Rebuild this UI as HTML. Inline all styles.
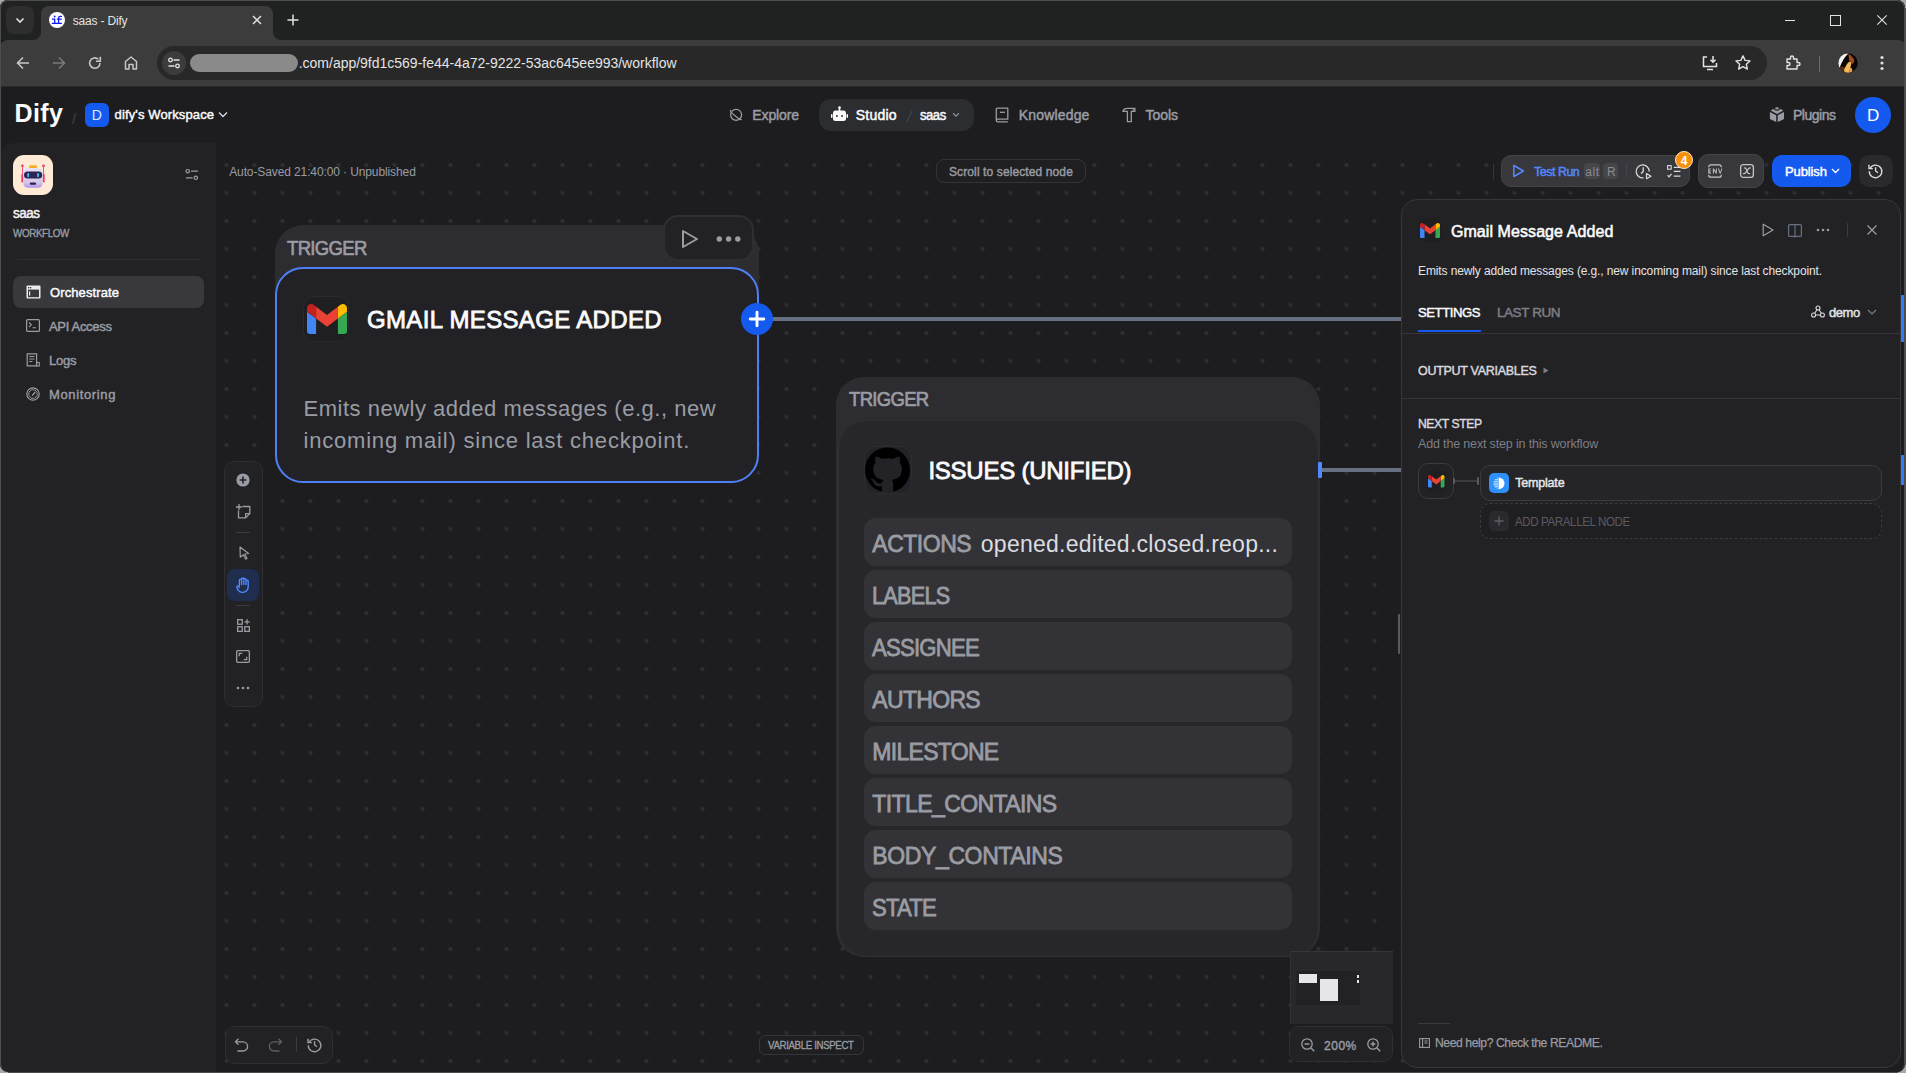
<!DOCTYPE html>
<html><head><meta charset="utf-8">
<style>
*{margin:0;padding:0;box-sizing:border-box}
html,body{width:1906px;height:1073px;overflow:hidden;background:#4d4c48}
.cn{position:absolute;width:8px;height:8px;background:#a8a8a8}
body{font-family:"Liberation Sans",sans-serif;position:relative}
.a{position:absolute}
.t{position:absolute;white-space:nowrap;line-height:1}
svg{position:absolute;overflow:visible}
#win{left:0;top:0;width:1905px;height:1072px;background:#1d1d20;border-radius:8px;overflow:hidden}
#wb{left:0;top:0;width:1905px;height:1072px;border-radius:8px;border:1px solid #4d4d4d;border-bottom:none;pointer-events:none}
.canvas{left:216px;top:143px;width:1690px;height:930px;background-color:#1d1d20;
 background-image:radial-gradient(circle at 14px 14px,#2e2e35 0,#2e2e35 1.5px,rgba(46,46,53,0) 2.3px);
 background-size:28px 28px;background-position:-3.5px 8px}
</style></head>
<body>
<div class="cn" style="left:0;top:1065px"></div><div class="cn" style="left:1898px;top:1065px"></div><div class="cn" style="left:1898px;top:0"></div><div class="cn" style="left:0;top:0"></div>
<div id="win" class="a">
<div class="a" style="left:0px;top:0px;width:1906px;height:40px;background:#202221;"></div>
<div class="a" style="left:6px;top:6px;width:28px;height:28px;background:#2e2e2e;border-radius:8px;"></div>
<svg style="left:14px;top:14px;" width="12" height="12" viewBox="0 0 12 12"><path d="M2.5 4.5 L6 8 L9.5 4.5" fill="none" stroke="#e3e3e3" stroke-width="1.6"/></svg>
<div class="a" style="left:41px;top:6px;width:232px;height:36px;background:#3c3c3c;border-radius:8px 8px 0 0;"></div>
<div class="a" style="left:33px;top:32px;width:8px;height:8px;background:#3c3c3c;"></div>
<div class="a" style="left:33px;top:32px;width:8px;height:8px;background:#202221;border-radius:0 0 8px 0;"></div>
<div class="a" style="left:273px;top:32px;width:8px;height:8px;background:#3c3c3c;"></div>
<div class="a" style="left:273px;top:32px;width:8px;height:8px;background:#202221;border-radius:0 0 0 8px;"></div>
<div class="a" style="left:49px;top:12px;width:16px;height:16px;background:#fff;border-radius:8px;"></div>
<svg style="left:45px;top:8px;" width="25" height="24" viewBox="0 0 25 24"><g stroke="#0a14ff" stroke-width="1.25" fill="none" stroke-linecap="round"><path d="M7.3 15.4H16.4"/><path d="M9.7 15.4V11H7.4"/><path d="M13.6 15.4V10.2Q13.6 8.3 15.6 8.4H16.4"/><path d="M12.3 11H16.4"/></g><circle cx="9.7" cy="8.5" r="0.9" fill="#0a14ff"/></svg>
<div class="t" style="left:72.7px;top:15.04px;font-size:12px;color:#e3e3e3;letter-spacing:-0.178px;">saas - Dify</div>
<svg style="left:252px;top:15px;" width="10" height="10" viewBox="0 0 10 10"><path d="M1 1L9 9M9 1L1 9" stroke="#e3e3e3" stroke-width="1.5"/></svg>
<svg style="left:287px;top:14px;" width="12" height="12" viewBox="0 0 12 12"><path d="M6 0.5V11.5M0.5 6H11.5" stroke="#e3e3e3" stroke-width="1.5"/></svg>
<svg style="left:1784px;top:14px;" width="12" height="12" viewBox="0 0 12 12"><path d="M1 6.5H11" stroke="#e3e3e3" stroke-width="1"/></svg>
<svg style="left:1830px;top:15px;" width="11" height="11" viewBox="0 0 11 11"><rect x="0.5" y="0.5" width="10" height="10" fill="none" stroke="#e3e3e3" stroke-width="1"/></svg>
<svg style="left:1877px;top:15px;" width="10" height="10" viewBox="0 0 10 10"><path d="M0.3 0.3L9.7 9.7M9.7 0.3L0.3 9.7" stroke="#e3e3e3" stroke-width="1.1"/></svg>
<div class="a" style="left:0px;top:40px;width:1906px;height:46px;background:#3c3c3c;border-radius:8px 8px 0 0;"></div>
<div class="a" style="left:0px;top:86px;width:1906px;height:1px;background:#2b2b2b;"></div>
<svg style="left:15px;top:55px;" width="16" height="16" viewBox="0 0 16 16"><path d="M14 8H2.5M8 2.5L2.5 8L8 13.5" fill="none" stroke="#c7c7c7" stroke-width="1.6"/></svg>
<svg style="left:51px;top:55px;" width="16" height="16" viewBox="0 0 16 16"><path d="M2 8H13.5M8 2.5L13.5 8L8 13.5" fill="none" stroke="#7a7a7a" stroke-width="1.6"/></svg>
<svg style="left:87px;top:55px;" width="16" height="16" viewBox="0 0 16 16"><path d="M13 8A5.2 5.2 0 1 1 11.3 4.2" fill="none" stroke="#c7c7c7" stroke-width="1.6"/><path d="M13.3 1.8V6.2H8.9" fill="none" stroke="#c7c7c7" stroke-width="1.6"/></svg>
<svg style="left:123px;top:55px;" width="16" height="16" viewBox="0 0 16 16"><path d="M2.5 14V6.5L8 2L13.5 6.5V14H10V9.5H6V14Z" fill="none" stroke="#c7c7c7" stroke-width="1.5" stroke-linejoin="round"/></svg>
<div class="a" style="left:157px;top:46px;width:1610px;height:34px;background:#282828;border-radius:17px;"></div>
<div class="a" style="left:162px;top:51px;width:24px;height:24px;background:#3c3c3c;border-radius:12px;"></div>
<svg style="left:167px;top:56px;" width="14" height="14" viewBox="0 0 14 14"><circle cx="3.5" cy="4" r="1.8" fill="none" stroke="#e3e3e3" stroke-width="1.3"/><path d="M6.5 4H12.5" stroke="#e3e3e3" stroke-width="1.3"/><circle cx="10.5" cy="10" r="1.8" fill="none" stroke="#e3e3e3" stroke-width="1.3"/><path d="M1.5 10H7.5" stroke="#e3e3e3" stroke-width="1.3"/></svg>
<div class="a" style="left:190px;top:54px;width:108px;height:18px;background:#8a8a8b;border-radius:9px;"></div>
<div class="t" style="left:298.7px;top:55.95px;font-size:14px;color:#e3e3e3;letter-spacing:-0.008px;">.com/app/9fd1c569-fe44-4a72-9222-53ac645ee993/workflow</div>
<svg style="left:1701px;top:54px;" width="18" height="18" viewBox="0 0 18 18"><path d="M6 3H2.5V12.5H15.5V9" fill="none" stroke="#e3e3e3" stroke-width="1.5"/><path d="M6 15.5H12" stroke="#e3e3e3" stroke-width="1.5"/><path d="M12 2V8M9.5 5.8L12 8.3L14.5 5.8" fill="none" stroke="#e3e3e3" stroke-width="1.5"/></svg>
<svg style="left:1734px;top:54px;" width="18" height="18" viewBox="0 0 18 18"><path d="M9 1.8L11.1 6.4L16 6.9L12.3 10.2L13.4 15.1L9 12.6L4.6 15.1L5.7 10.2L2 6.9L6.9 6.4Z" fill="none" stroke="#e3e3e3" stroke-width="1.4" stroke-linejoin="round"/></svg>
<svg style="left:1784px;top:54px;" width="18" height="18" viewBox="0 0 18 18"><path d="M3 5H6.5V3.5A1.5 1.5 0 0 1 9.5 3.5V5H13V8.5H14.5A1.5 1.5 0 0 1 14.5 11.5H13V15H3V11.5H4.5A1.5 1.5 0 0 0 4.5 8.5H3Z" fill="none" stroke="#e3e3e3" stroke-width="1.4" stroke-linejoin="round"/></svg>
<div class="a" style="left:1819px;top:56px;width:1px;height:16px;background:#6a6a6a;"></div>
<svg style="left:1837.5px;top:53px;" width="20" height="20" viewBox="0 0 20 20"><defs><clipPath id="av"><circle cx="10" cy="10" r="9.7"/></clipPath></defs><g clip-path="url(#av)"><rect width="20" height="20" fill="#0a0604"/><path d="M10.5 0.5Q5 5 1.5 15L-1 15V0Z" fill="#f2f2f2"/><path d="M1 14Q5 13 8 15L9 20H0Z" fill="#5a2a12"/><path d="M6 17Q9 9 12 8.5Q14 9 13 12L11 20H7Z" fill="#f0b85a"/><path d="M10.5 0.5Q14 3 16 6Q17 10 14 11Q12 9 11 7Z" fill="#9a4a1c"/><path d="M12 15Q14 14 14.5 18L13 20H11Z" fill="#e8a040"/></g></svg>
<svg style="left:1879px;top:55px;" width="6" height="16" viewBox="0 0 6 16"><circle cx="3" cy="2.5" r="1.6" fill="#e3e3e3"/><circle cx="3" cy="8" r="1.6" fill="#e3e3e3"/><circle cx="3" cy="13.5" r="1.6" fill="#e3e3e3"/></svg>
<div class="t" style="left:14.5px;top:100.83px;font-size:25px;color:#fbfbfc;font-weight:bold;letter-spacing:0.425px;">Dify</div>
<div class="t" style="left:72.0px;top:111.3px;font-size:15px;color:#3f4046;">/</div>
<div class="a" style="left:85px;top:103px;width:24px;height:24px;background:#155aef;border-radius:6px;"></div>
<div class="t" style="left:91.8px;top:108.15px;font-size:14px;color:#dfe8ff;">D</div>
<div class="t" style="left:114.6px;top:107.99px;font-size:13px;color:#fbfbfc;-webkit-text-stroke:0.442px #fbfbfc;letter-spacing:0.12px;">dify's Workspace</div>
<svg style="left:218px;top:111px;" width="10" height="7" viewBox="0 0 10 7"><path d="M1 1.5L5 5.5L9 1.5" fill="none" stroke="#d9d9de" stroke-width="1.3"/></svg>
<svg style="left:728px;top:106px;" width="16" height="16" viewBox="0 0 16 16"><circle cx="8.1" cy="8.8" r="5.5" fill="none" stroke="#9a9ca3" stroke-width="1.3"/><path d="M-7.4 0A7.4 1.6 0 0 0 7.4 0" transform="translate(8.1 8.6) rotate(40)" fill="none" stroke="#9a9ca3" stroke-width="1.2"/></svg>
<div class="t" style="left:752.3px;top:108.15px;font-size:14px;color:#9a9ca3;-webkit-text-stroke:0.476px #9a9ca3;letter-spacing:-0.112px;">Explore</div>
<div class="a" style="left:819px;top:99px;width:155px;height:32px;background:#2c2d31;border-radius:12px;"></div>
<svg style="left:831px;top:106px;" width="17" height="16" viewBox="0 0 17 16"><rect x="2" y="4.5" width="13" height="10.5" rx="2.5" fill="#fbfbfc"/><rect x="7.7" y="1.5" width="1.6" height="3.5" fill="#fbfbfc"/><circle cx="8.5" cy="1.6" r="1.3" fill="#fbfbfc"/><rect x="0" y="8" width="1.5" height="4" rx="0.7" fill="#fbfbfc"/><rect x="15.5" y="8" width="1.5" height="4" rx="0.7" fill="#fbfbfc"/><rect x="5" y="9.2" width="1.8" height="1.6" fill="#2c2d31"/><rect x="10.2" y="9.2" width="1.8" height="1.6" fill="#2c2d31"/></svg>
<div class="t" style="left:855.7px;top:108.15px;font-size:14px;color:#fbfbfc;-webkit-text-stroke:0.476px #fbfbfc;letter-spacing:0.242px;">Studio</div>
<svg style="left:906px;top:110px;" width="7" height="13" viewBox="0 0 7 13"><path d="M6.2 0.5L0.8 12.5" stroke="#4a4b52" stroke-width="1"/></svg>
<div class="t" style="left:919.8px;top:108.15px;font-size:14px;color:#fbfbfc;-webkit-text-stroke:0.476px #fbfbfc;letter-spacing:-0.49px;transform:scaleX(0.9325);transform-origin:0.0px 0;">saas</div>
<svg style="left:952px;top:112px;" width="8" height="6" viewBox="0 0 8 6"><path d="M1 1.2L4 4.2L7 1.2" fill="none" stroke="#9a9ca3" stroke-width="1.1"/></svg>
<svg style="left:995px;top:107px;" width="14" height="16" viewBox="0 0 14 16"><path d="M1.3 14V2.2Q1.3 1.2 2.3 1.2H12.8V12.2H2.8Q1.3 12.2 1.3 13.5Q1.3 14.8 2.8 14.8H12.8" fill="none" stroke="#9a9ca3" stroke-width="1.3" stroke-linejoin="round"/><path d="M5 5.3H10" stroke="#9a9ca3" stroke-width="1.3"/></svg>
<div class="t" style="left:1018.7px;top:108.15px;font-size:14px;color:#9a9ca3;-webkit-text-stroke:0.476px #9a9ca3;letter-spacing:0.179px;">Knowledge</div>
<svg style="left:1122px;top:107px;" width="14" height="16" viewBox="0 0 14 16"><path d="M0.9 4.4Q1.6 1.3 5 1.3H12.9V4.4H9.3V14.7H5.4V4.4Z" fill="none" stroke="#9a9ca3" stroke-width="1.3" stroke-linejoin="round"/><path d="M11.2 1.3V4.4" stroke="#9a9ca3" stroke-width="1"/></svg>
<div class="t" style="left:1145.6px;top:108.15px;font-size:14px;color:#9a9ca3;-webkit-text-stroke:0.476px #9a9ca3;letter-spacing:-0.069px;">Tools</div>
<svg style="left:1769px;top:106px;" width="16" height="17" viewBox="0 0 16 17"><path d="M0.9 6L7.2 9.2V16.1L0.9 13Z" fill="#9a9ca3"/><path d="M15 6L8.7 9.2V16.1L15 13Z" fill="#9a9ca3"/><path d="M1.6 4.6L8 1.3L14.4 4.6L8 8.1Z" fill="#9a9ca3"/><ellipse cx="8" cy="2.4" rx="2.5" ry="1.7" fill="#9a9ca3" stroke="#1d1d20" stroke-width="1.1"/></svg>
<div class="t" style="left:1793.0px;top:108.15px;font-size:14px;color:#9a9ca3;-webkit-text-stroke:0.476px #9a9ca3;letter-spacing:-0.487px;">Plugins</div>
<div class="a" style="left:1855px;top:97px;width:36px;height:36px;background:#155aef;border-radius:18px;"></div>
<div class="t" style="left:1867.0px;top:106.61px;font-size:17px;color:#ffffff;">D</div>
<div class="a canvas"></div>
<div class="a" style="left:1px;top:143px;width:215px;height:929px;background:#222225;border-radius:12px 0 0 8px;"></div>
<div class="a" style="left:13px;top:155px;width:40px;height:40px;background:#ffead5;border-radius:11px;"></div>
<svg style="left:13px;top:155px;" width="40" height="40" viewBox="0 0 40 40"><defs><linearGradient id="rb" x1="0" y1="0" x2="0" y2="1"><stop offset="0" stop-color="#e6e2f4"/><stop offset="0.75" stop-color="#d2c6ea"/><stop offset="1" stop-color="#b592e6"/></linearGradient><linearGradient id="yb" x1="0" y1="0" x2="0" y2="1"><stop offset="0" stop-color="#f9c646"/><stop offset="1" stop-color="#e8a010"/></linearGradient></defs>
 <rect x="9" y="11" width="0.9" height="9" fill="#f0407a"/><rect x="30.1" y="11" width="0.9" height="9" fill="#f0407a"/>
 <rect x="8.3" y="19" width="2" height="8.5" rx="1" fill="#ec3b73"/><rect x="29.7" y="19" width="2" height="8.5" rx="1" fill="#ec3b73"/>
 <circle cx="9.4" cy="10.8" r="1.4" fill="#f0407a"/><circle cx="30.5" cy="10.8" r="1.4" fill="#f0407a"/>
 <rect x="16.1" y="10.1" width="7.9" height="3.2" rx="1.5" fill="url(#yb)"/>
 <rect x="10.3" y="12.9" width="19.3" height="19.8" rx="4.5" fill="url(#rb)"/>
 <rect x="11" y="16.4" width="18.2" height="7" rx="3.5" fill="#2e2550"/>
 <rect x="14.3" y="18" width="1.8" height="4.2" rx="0.9" fill="#3cc3ff"/><rect x="24.1" y="18" width="1.8" height="4.2" rx="0.9" fill="#3cc3ff"/>
 <rect x="16.8" y="27.6" width="6.3" height="2.1" rx="1" fill="#2e2550"/></svg>
<svg style="left:185px;top:168px;" width="14" height="14" viewBox="0 0 14 14"><circle cx="2.7" cy="3.2" r="1.7" fill="none" stroke="#9a9ca3" stroke-width="1.2"/><path d="M6 3.2H13" stroke="#9a9ca3" stroke-width="1.3"/><circle cx="10.8" cy="9.8" r="1.7" fill="none" stroke="#9a9ca3" stroke-width="1.2"/><path d="M1 9.8H7.6" stroke="#9a9ca3" stroke-width="1.3"/></svg>
<div class="t" style="left:13.0px;top:206.15px;font-size:14px;color:#f4f4f5;-webkit-text-stroke:0.476px #f4f4f5;letter-spacing:-0.49px;transform:scaleX(0.9609);transform-origin:0.0px 0;">saas</div>
<div class="t" style="left:13.0px;top:228.53px;font-size:10px;color:#9a9ca3;-webkit-text-stroke:0.34px #9a9ca3;letter-spacing:-0.35px;transform:scaleX(0.9783);transform-origin:0.0px 0;">WORKFLOW</div>
<div class="a" style="left:17px;top:259px;width:183px;height:1px;background:#2c2c31;"></div>
<div class="a" style="left:13px;top:276px;width:191px;height:32px;background:#38383d;border-radius:8px;"></div>
<svg style="left:26px;top:285px;" width="15" height="14" viewBox="0 0 15 14"><rect x="0.5" y="0.5" width="14" height="13" rx="1" fill="#ececee"/><rect x="2" y="4.6" width="11" height="7.6" fill="#38383d"/><rect x="2" y="2" width="1.3" height="1.3" fill="#38383d"/><rect x="4" y="2" width="1.3" height="1.3" fill="#38383d"/><rect x="3" y="6.3" width="1.2" height="4.3" fill="#ececee"/></svg>
<div class="t" style="left:50.0px;top:285.69px;font-size:13px;color:#fbfbfc;-webkit-text-stroke:0.442px #fbfbfc;letter-spacing:0.099px;">Orchestrate</div>
<svg style="left:26px;top:319px;" width="14" height="13" viewBox="0 0 14 13"><rect x="0.6" y="0.6" width="12.8" height="11.8" rx="1" fill="none" stroke="#9a9ca3" stroke-width="1.2"/><path d="M3 3.5L5.3 5.8L3 8.1M6.5 8.8H10" fill="none" stroke="#9a9ca3" stroke-width="1.1"/></svg>
<div class="t" style="left:49.0px;top:319.79px;font-size:13px;color:#9a9ca3;-webkit-text-stroke:0.442px #9a9ca3;letter-spacing:-0.317px;">API Access</div>
<svg style="left:26px;top:353px;" width="14" height="14" viewBox="0 0 14 14"><path d="M11 12.8H1.2V0.8H10.6V12.2" fill="none" stroke="#9a9ca3" stroke-width="1.2"/><path d="M3.2 3.5H8.5M3.2 6H8.5M3.2 8.5H6.5" stroke="#9a9ca3" stroke-width="1.1"/><rect x="10.5" y="9.5" width="2.8" height="3.5" fill="none" stroke="#9a9ca3" stroke-width="1.1"/></svg>
<div class="t" style="left:49.0px;top:353.99px;font-size:13px;color:#9a9ca3;-webkit-text-stroke:0.442px #9a9ca3;letter-spacing:-0.228px;">Logs</div>
<svg style="left:26px;top:387px;" width="14" height="14" viewBox="0 0 14 14"><circle cx="7" cy="7" r="6.2" fill="none" stroke="#9a9ca3" stroke-width="1.2"/><circle cx="7" cy="7" r="4.3" fill="none" stroke="#9a9ca3" stroke-width="0.9"/><path d="M6.2 8.6L9.2 5" stroke="#9a9ca3" stroke-width="1.3"/></svg>
<div class="t" style="left:49.0px;top:387.99px;font-size:13px;color:#9a9ca3;-webkit-text-stroke:0.442px #9a9ca3;letter-spacing:0.634px;">Monitoring</div>
<div class="t" style="left:229.2px;top:165.94px;font-size:12px;color:#9a9ca3;letter-spacing:-0.11px;">Auto-Saved 21:40:00 · Unpublished</div>
<div class="a" style="left:936px;top:159px;width:150px;height:24px;background:#1f1f22;border-radius:8px;border:1px solid #34343a;"></div>
<div class="t" style="left:949.0px;top:165.84px;font-size:12px;color:#9a9ca3;-webkit-text-stroke:0.408px #9a9ca3;letter-spacing:0.109px;">Scroll to selected node</div>
<div class="a" style="left:1493px;top:164px;width:1px;height:16px;background:#34343a;"></div>
<div class="a" style="left:1501px;top:155px;width:189px;height:32px;background:rgba(60,60,65,0.86);border-radius:10px;border:1px solid #434349;"></div>
<svg style="left:1512px;top:164px;" width="13" height="14" viewBox="0 0 13 14"><path d="M1.8 1.5L11.5 7L1.8 12.5Z" fill="none" stroke="#5289ff" stroke-width="1.5" stroke-linejoin="round"/></svg>
<div class="t" style="left:1534.3px;top:165.19px;font-size:13px;color:#5289ff;-webkit-text-stroke:0.442px #5289ff;letter-spacing:-0.455px;transform:scaleX(0.9498);transform-origin:0.0px 0;">Test Run</div>
<div class="a" style="left:1584px;top:163px;width:16px;height:16px;background:#45454a;border-radius:4px;"></div>
<div class="a" style="left:1602.5px;top:163px;width:15.5px;height:16px;background:#45454a;border-radius:4px;"></div>
<div class="t" style="left:1585.3px;top:166.04px;font-size:12px;color:#8a8c93;letter-spacing:0.514px;">alt</div>
<div class="t" style="left:1606.9px;top:166.04px;font-size:12px;color:#8a8c93;">R</div>
<div class="a" style="left:1626px;top:164px;width:1px;height:14px;background:#44444a;"></div>
<svg style="left:1635px;top:163px;" width="17" height="17" viewBox="0 0 17 17"><path d="M14.2 8.5A6.5 6.5 0 1 0 8.5 14.9" fill="none" stroke="#d9d9de" stroke-width="1.3"/><path d="M8.2 4.2V8.6L6 10.4" fill="none" stroke="#d9d9de" stroke-width="1.3"/><path d="M11.5 10.6L16 13.2L11.5 15.8Z" fill="none" stroke="#d9d9de" stroke-width="1.2" stroke-linejoin="round"/></svg>
<svg style="left:1666.8px;top:165px;" width="14" height="13" viewBox="0 0 14 13"><rect x="0.6" y="0.6" width="3.6" height="3.6" fill="none" stroke="#d9d9de" stroke-width="1.1"/><path d="M6.8 2.4H13.4M6.8 6.4H13.4M6.8 11.2H13.4" stroke="#d9d9de" stroke-width="1.2"/><path d="M0.6 10.2L2 11.8L4.6 8.8" fill="none" stroke="#d9d9de" stroke-width="1.2"/></svg>
<div class="a" style="left:1675.3px;top:151.3px;width:17.8px;height:17.8px;background:#f79009;border-radius:9px;border:1.3px solid #fde8cc;"></div>
<div class="t" style="left:1680.7px;top:154.64px;font-size:12px;color:#ffffff;font-weight:bold;">4</div>
<div class="a" style="left:1698px;top:154px;width:66px;height:34px;background:rgba(60,60,65,0.86);border-radius:10px;border:1px solid #434349;"></div>
<svg style="left:1708px;top:164px;" width="14" height="14" viewBox="0 0 14 14"><g fill="none" stroke="#c4c4c9" stroke-width="1.2" stroke-linecap="round"><path d="M0.8 2.8Q0.8 0.8 2.8 0.8H11.2Q13.2 0.8 13.2 2.8"/><path d="M0.8 11.2Q0.8 13.2 2.8 13.2H11.2Q13.2 13.2 13.2 11.2"/></g><g fill="#c4c4c9"><path d="M0.3 4.4H3V5.3H1.3V6.6H2.8V7.4H1.3V8.6H3V9.5H0.3Z"/><path d="M4.9 4.4H5.9L7.9 7.7V4.4H8.8V9.5H7.9L5.9 6.2V9.5H4.9Z"/><path d="M10 4.4H11L12.2 8.2L13.4 4.4H14.3L12.7 9.5H11.7Z"/></g></svg>
<svg style="left:1740px;top:164px;" width="14" height="14" viewBox="0 0 14 14"><rect x="0.65" y="0.65" width="12.7" height="12.7" rx="2.6" fill="none" stroke="#c4c4c9" stroke-width="1.3"/><path d="M3.4 9.6Q4.6 10 5.6 8.6L8.6 4.6Q9.5 3.6 10.4 4M4.4 4Q5.6 3.7 6.2 5L7.6 8.4Q8.2 9.8 9.6 9.6" fill="none" stroke="#c4c4c9" stroke-width="1.2" stroke-linecap="round"/></svg>
<div class="a" style="left:1772px;top:155px;width:79px;height:32px;background:#155aef;border-radius:10px;"></div>
<div class="t" style="left:1785.0px;top:164.79px;font-size:13px;color:#ffffff;-webkit-text-stroke:0.442px #ffffff;letter-spacing:-0.123px;">Publish</div>
<svg style="left:1831px;top:168px;" width="9" height="6" viewBox="0 0 9 6"><path d="M1 1L4.5 4.5L8 1" fill="none" stroke="#ffffff" stroke-width="1.3"/></svg>
<div class="a" style="left:1859px;top:155px;width:34px;height:32px;background:#2a2a2e;border-radius:10px;"></div>
<svg style="left:1868px;top:163px;" width="15" height="15" viewBox="0 0 15 15"><path d="M2.2 5.2A6.3 6.3 0 1 1 1.3 8.2" fill="none" stroke="#d9d9de" stroke-width="1.4"/><path d="M1 1.8V5.6H4.8" fill="none" stroke="#d9d9de" stroke-width="1.4"/><path d="M7.6 4.3V8L10 9.8" fill="none" stroke="#d9d9de" stroke-width="1.4"/></svg>
<div class="a" style="left:771px;top:317.2px;width:631px;height:3.6px;background:#676f83;"></div>
<div class="a" style="left:1322px;top:468.2px;width:80px;height:3.6px;background:#676f83;"></div>
<div class="a" style="left:275px;top:225px;width:484px;height:258px;background:#2c2c31;border-radius:28px;"></div>
<div class="t" style="left:286.5px;top:238.07px;font-size:20px;color:#9a9ca3;-webkit-text-stroke:0.68px #9a9ca3;letter-spacing:-0.7px;transform:scaleX(0.925);transform-origin:0.0px 0;">TRIGGER</div>
<div class="a" style="left:663px;top:215px;width:91px;height:46px;background:#222225;border-radius:15px;border:2px solid #2e2e33;"></div>
<svg style="left:680px;top:229px;" width="20" height="20" viewBox="0 0 20 20"><path d="M3 2L17 10L3 18Z" fill="none" stroke="#9a9ca3" stroke-width="2" stroke-linejoin="round"/></svg>
<svg style="left:715px;top:235px;" width="28" height="8" viewBox="0 0 28 8"><circle cx="4.3" cy="4" r="2.7" fill="#9a9ca3"/><circle cx="13.6" cy="4" r="2.7" fill="#9a9ca3"/><circle cx="22.8" cy="4" r="2.7" fill="#9a9ca3"/></svg>
<div class="a" style="left:275px;top:267px;width:484px;height:216px;background:#222226;border-radius:28px;border:2px solid #4f7ff5;"></div>
<div class="a" style="left:303px;top:296px;width:46px;height:46px;background:#1f1f22;border-radius:11px;border:1px solid #2a2a2e;"></div>
<svg style="left:306.5px;top:304px;" width="40" height="30" viewBox="52 42 88 66"><path fill="#4285f4" d="M58 108h14V74L52 59v43c0 3.32 2.69 6 6 6"/><path fill="#34a853" d="M120 108h14c3.32 0 6-2.69 6-6V59l-20 15"/><path fill="#fbbc04" d="M120 48v26l20-15v-8c0-7.42-8.47-11.65-14.4-7.2"/><path fill="#ea4335" d="M72 74V48l24 18 24-18v26L96 92"/><path fill="#c5221f" d="M52 51v8l20 15V48l-5.6-4.2c-5.94-4.45-14.4-.22-14.4 7.2"/></svg>
<div class="t" style="left:367.0px;top:307.78px;font-size:24px;color:#fbfbfc;-webkit-text-stroke:0.816px #fbfbfc;letter-spacing:0.337px;">GMAIL MESSAGE ADDED</div>
<div class="t" style="left:303.5px;top:397.87px;font-size:22px;color:#9a9ca3;letter-spacing:0.508px;">Emits newly added messages (e.g., new</div>
<div class="t" style="left:303.5px;top:429.97px;font-size:22px;color:#9a9ca3;letter-spacing:0.799px;">incoming mail) since last checkpoint.</div>
<div class="a" style="left:740.6px;top:303px;width:32.0px;height:32px;background:#155aef;border-radius:16px;"></div>
<svg style="left:748.6px;top:311px;" width="16" height="16" viewBox="0 0 16 16"><path d="M8 1.2V14.8M1.2 8H14.8" stroke="#ffffff" stroke-width="2.9" stroke-linecap="round"/></svg>
<div class="a" style="left:836px;top:377px;width:484px;height:580px;background:#2c2c31;border-radius:28px;"></div>
<div class="t" style="left:848.7px;top:389.07px;font-size:20px;color:#9a9ca3;-webkit-text-stroke:0.68px #9a9ca3;letter-spacing:-0.7px;transform:scaleX(0.9227);transform-origin:0.0px 0;">TRIGGER</div>
<div class="a" style="left:838px;top:420px;width:481px;height:537px;background:#27272b;border-radius:28px;border:1px solid #303035;"></div>
<div class="a" style="left:864px;top:446px;width:48px;height:48px;background:#232327;border-radius:12px;border:1px solid #2c2c31;"></div>
<svg style="left:865.4px;top:447px;" width="45" height="46" viewBox="0 0 16 16"><path fill="#000000" d="M8 0C3.58 0 0 3.58 0 8c0 3.54 2.29 6.53 5.47 7.59.4.07.55-.17.55-.38 0-.19-.01-.82-.01-1.49-2.01.37-2.53-.49-2.69-.94-.09-.23-.48-.94-.82-1.13-.28-.15-.68-.52-.01-.53.63-.01 1.08.58 1.23.82.72 1.21 1.87.87 2.33.66.07-.52.28-.87.51-1.07-1.78-.2-3.64-.89-3.64-3.95 0-.87.31-1.59.82-2.15-.08-.2-.36-1.02.08-2.12 0 0 .67-.21 2.2.82.64-.18 1.32-.27 2-.27.68 0 1.36.09 2 .27 1.53-1.04 2.2-.82 2.2-.82.44 1.1.16 1.92.08 2.12.51.56.82 1.27.82 2.15 0 3.07-1.87 3.75-3.65 3.95.29.25.54.73.54 1.48 0 1.07-.01 1.93-.01 2.2 0 .21.15.46.55.38A8.013 8.013 0 0016 8c0-4.42-3.58-8-8-8z"/></svg>
<div class="t" style="left:928.4px;top:459.38px;font-size:24px;color:#fbfbfc;-webkit-text-stroke:0.816px #fbfbfc;letter-spacing:-0.239px;">ISSUES (UNIFIED)</div>
<div class="a" style="left:864px;top:518px;width:428px;height:48px;background:#323237;border-radius:12px;"></div>
<div class="t" style="left:872.3px;top:533.03px;font-size:23px;color:#9a9ca3;-webkit-text-stroke:0.782px #9a9ca3;letter-spacing:-0.489px;">ACTIONS</div>
<div class="a" style="left:864px;top:570px;width:428px;height:48px;background:#323237;border-radius:12px;"></div>
<div class="t" style="left:872.3px;top:585.03px;font-size:23px;color:#9a9ca3;-webkit-text-stroke:0.782px #9a9ca3;letter-spacing:-0.805px;transform:scaleX(0.9431);transform-origin:0.0px 0;">LABELS</div>
<div class="a" style="left:864px;top:622px;width:428px;height:48px;background:#323237;border-radius:12px;"></div>
<div class="t" style="left:872.3px;top:637.03px;font-size:23px;color:#9a9ca3;-webkit-text-stroke:0.782px #9a9ca3;letter-spacing:-0.805px;transform:scaleX(0.9619);transform-origin:0.0px 0;">ASSIGNEE</div>
<div class="a" style="left:864px;top:674px;width:428px;height:48px;background:#323237;border-radius:12px;"></div>
<div class="t" style="left:872.3px;top:689.03px;font-size:23px;color:#9a9ca3;-webkit-text-stroke:0.782px #9a9ca3;letter-spacing:-0.674px;">AUTHORS</div>
<div class="a" style="left:864px;top:726px;width:428px;height:48px;background:#323237;border-radius:12px;"></div>
<div class="t" style="left:872.3px;top:741.03px;font-size:23px;color:#9a9ca3;-webkit-text-stroke:0.782px #9a9ca3;letter-spacing:-0.7px;">MILESTONE</div>
<div class="a" style="left:864px;top:778px;width:428px;height:48px;background:#323237;border-radius:12px;"></div>
<div class="t" style="left:872.3px;top:793.03px;font-size:23px;color:#9a9ca3;-webkit-text-stroke:0.782px #9a9ca3;letter-spacing:-0.589px;">TITLE_CONTAINS</div>
<div class="a" style="left:864px;top:830px;width:428px;height:48px;background:#323237;border-radius:12px;"></div>
<div class="t" style="left:872.3px;top:845.03px;font-size:23px;color:#9a9ca3;-webkit-text-stroke:0.782px #9a9ca3;letter-spacing:-0.376px;">BODY_CONTAINS</div>
<div class="a" style="left:864px;top:882px;width:428px;height:48px;background:#323237;border-radius:12px;"></div>
<div class="t" style="left:872.3px;top:897.03px;font-size:23px;color:#9a9ca3;-webkit-text-stroke:0.782px #9a9ca3;letter-spacing:-0.805px;transform:scaleX(0.9603);transform-origin:0.0px 0;">STATE</div>
<div class="t" style="left:980.8px;top:532.93px;font-size:23px;color:#dcdde1;letter-spacing:0.252px;">opened.edited.closed.reop...</div>
<div class="a" style="left:1318px;top:462px;width:4px;height:16px;background:#5289ff;border-radius:1px;"></div>
<div class="a" style="left:224px;top:461px;width:39px;height:246px;background:#222225;border-radius:10px;border:1px solid #2e2e33;"></div>
<svg style="left:236px;top:473px;" width="14" height="14" viewBox="0 0 14 14"><circle cx="7" cy="7" r="6.6" fill="#9a9ca3"/><path d="M7 3.6V10.4M3.6 7H10.4" stroke="#222225" stroke-width="1.6"/></svg>
<svg style="left:236px;top:504px;" width="15" height="15" viewBox="0 0 15 15"><path d="M6.5 2.5H13.8V9.6L9.6 13.8H2.5V6.5" fill="none" stroke="#9a9ca3" stroke-width="1.3" stroke-linejoin="round"/><path d="M9.6 13.8V9.6H13.8" fill="none" stroke="#9a9ca3" stroke-width="1.2" stroke-linejoin="round"/><path d="M3 0V6M0 3H6" stroke="#9a9ca3" stroke-width="1.3"/></svg>
<div class="a" style="left:236px;top:532px;width:14px;height:1px;background:#3a3a40;"></div>
<svg style="left:239px;top:546px;" width="11" height="14" viewBox="0 0 11 14"><path d="M1 1L9.6 7.4L5.8 8L8 12.4L6.6 13.1L4.4 8.7L1.3 11.2Z" fill="none" stroke="#9a9ca3" stroke-width="1.2" stroke-linejoin="round"/></svg>
<div class="a" style="left:227px;top:569px;width:32px;height:32px;background:#1f2d4f;border-radius:8px;"></div>
<svg style="left:236px;top:577px;" width="13" height="16" viewBox="0 0 13 16"><path d="M3.4 8.6V3.2A1.1 1.1 0 0 1 5.6 3.2V7.4M5.6 2.1A1.1 1.1 0 0 1 7.8 2.1V7.4M7.8 2.6A1.1 1.1 0 0 1 10 2.6V7.6M10 4.2A1.1 1.1 0 0 1 12.2 4.2V10A5.4 5.4 0 0 1 6.8 15.4H6.4A5 5 0 0 1 2.3 13.4L0.9 10.4A1 1 0 0 1 2.6 9.4L3.4 10.4" fill="none" stroke="#5289ff" stroke-width="1.35" stroke-linejoin="round" stroke-linecap="round"/></svg>
<div class="a" style="left:236px;top:605px;width:14px;height:1px;background:#3a3a40;"></div>
<svg style="left:237px;top:619px;" width="13" height="13" viewBox="0 0 13 13"><rect x="0.65" y="0.65" width="4.6" height="4.6" fill="none" stroke="#9a9ca3" stroke-width="1.3"/><rect x="0.65" y="7.75" width="4.6" height="4.6" fill="none" stroke="#9a9ca3" stroke-width="1.3"/><rect x="7.75" y="7.75" width="4.6" height="4.6" fill="none" stroke="#9a9ca3" stroke-width="1.3"/><path d="M10.05 0.3V5.6M7.4 2.95H12.7" stroke="#9a9ca3" stroke-width="1.3"/></svg>
<svg style="left:236px;top:650px;" width="14" height="13" viewBox="0 0 14 13"><rect x="0.65" y="0.65" width="12.7" height="11.7" rx="1" fill="none" stroke="#9a9ca3" stroke-width="1.3"/><path d="M3.3 6.3V3.3H6.3M10.7 6.7V9.7H7.7" fill="none" stroke="#9a9ca3" stroke-width="1.3"/></svg>
<svg style="left:236px;top:686px;" width="14" height="4" viewBox="0 0 14 4"><circle cx="2" cy="2" r="1.3" fill="#9a9ca3"/><circle cx="7" cy="2" r="1.3" fill="#9a9ca3"/><circle cx="12" cy="2" r="1.3" fill="#9a9ca3"/></svg>
<div class="a" style="left:225px;top:1026px;width:108px;height:38px;background:#222225;border-radius:10px;border:1px solid #2e2e33;"></div>
<svg style="left:234px;top:1037px;" width="15" height="15" viewBox="0 0 15 15"><path d="M4.5 1.8L1.5 4.8L4.5 7.8" fill="none" stroke="#9a9ca3" stroke-width="1.3"/><path d="M1.8 4.8H9A4.6 4.6 0 0 1 9 14H3.5" fill="none" stroke="#9a9ca3" stroke-width="1.3"/></svg>
<svg style="left:268px;top:1037px;" width="15" height="15" viewBox="0 0 15 15"><path d="M10.5 1.8L13.5 4.8L10.5 7.8" fill="none" stroke="#5e6068" stroke-width="1.3"/><path d="M13.2 4.8H6A4.6 4.6 0 0 0 6 14H11.5" fill="none" stroke="#5e6068" stroke-width="1.3"/></svg>
<div class="a" style="left:296px;top:1037px;width:1px;height:15px;background:#3a3a40;"></div>
<svg style="left:307px;top:1037px;" width="15" height="15" viewBox="0 0 15 15"><path d="M2.2 5.2A6.3 6.3 0 1 1 1.3 8.2" fill="none" stroke="#9a9ca3" stroke-width="1.4"/><path d="M1 1.8V5.6H4.8" fill="none" stroke="#9a9ca3" stroke-width="1.4"/><path d="M7.6 4.3V8L10 9.8" fill="none" stroke="#9a9ca3" stroke-width="1.4"/></svg>
<div class="a" style="left:759px;top:1035px;width:105px;height:20px;background:#1f1f22;border-radius:6px;border:1px solid #34343a;"></div>
<div class="t" style="left:768.4px;top:1041.13px;font-size:10px;color:#9a9ca3;-webkit-text-stroke:0.34px #9a9ca3;letter-spacing:-0.35px;transform:scaleX(0.9659);transform-origin:0.0px 0;">VARIABLE INSPECT</div>
<div class="a" style="left:1290px;top:951px;width:103px;height:73px;background:#28282c;border-top:1px solid #35353a;border-left:1px solid #303035;"></div>
<div class="a" style="left:1296px;top:971px;width:64px;height:34px;background:#222226;"></div>
<div class="a" style="left:1299px;top:974px;width:18px;height:9px;background:#e6e6e8;"></div>
<div class="a" style="left:1320px;top:979px;width:18px;height:22px;background:#e6e6e8;"></div>
<div class="a" style="left:1357px;top:975px;width:2px;height:3px;background:#e6e6e8;"></div>
<div class="a" style="left:1357px;top:980px;width:2px;height:3px;background:#e6e6e8;"></div>
<div class="a" style="left:1289px;top:1026px;width:104px;height:36px;background:#222225;border-radius:10px;border:1px solid #2e2e33;"></div>
<svg style="left:1301px;top:1038px;" width="14" height="14" viewBox="0 0 14 14"><circle cx="6" cy="6" r="5.2" fill="none" stroke="#9a9ca3" stroke-width="1.3"/><path d="M3.6 6H8.4M9.8 9.8L13.2 13.2" stroke="#9a9ca3" stroke-width="1.4"/></svg>
<div class="t" style="left:1324.1px;top:1039.84px;font-size:12px;color:#9a9ca3;-webkit-text-stroke:0.408px #9a9ca3;letter-spacing:0.468px;">200%</div>
<svg style="left:1367px;top:1038px;" width="14" height="14" viewBox="0 0 14 14"><circle cx="6" cy="6" r="5.2" fill="none" stroke="#9a9ca3" stroke-width="1.3"/><path d="M3.6 6H8.4M6 3.6V8.4M9.8 9.8L13.2 13.2" stroke="#9a9ca3" stroke-width="1.4"/></svg>
<div class="a" style="left:1898px;top:295px;width:7px;height:47px;background:#2f7cf6;border-radius:4px 0 0 4px;"></div>
<div class="a" style="left:1898px;top:455px;width:7px;height:30px;background:#2f7cf6;border-radius:4px 0 0 4px;"></div>
<div class="a" style="left:1398px;top:614px;width:2px;height:40px;background:#5a5a60;border-radius:1px;"></div>
<div class="a" style="left:1401px;top:199px;width:500px;height:869px;background:#222225;border-radius:16px;border:1px solid #36363b;"></div>
<div class="a" style="left:1418.5px;top:218px;width:22.5px;height:23.5px;background:#1f1f22;border-radius:6px;"></div>
<svg style="left:1420px;top:222.7px;" width="20" height="15" viewBox="52 42 88 66"><path fill="#4285f4" d="M58 108h14V74L52 59v43c0 3.32 2.69 6 6 6"/><path fill="#34a853" d="M120 108h14c3.32 0 6-2.69 6-6V59l-20 15"/><path fill="#fbbc04" d="M120 48v26l20-15v-8c0-7.42-8.47-11.65-14.4-7.2"/><path fill="#ea4335" d="M72 74V48l24 18 24-18v26L96 92"/><path fill="#c5221f" d="M52 51v8l20 15V48l-5.6-4.2c-5.94-4.45-14.4-.22-14.4 7.2"/></svg>
<div class="t" style="left:1450.9px;top:223.65px;font-size:16px;color:#fbfbfc;-webkit-text-stroke:0.544px #fbfbfc;letter-spacing:0.079px;">Gmail Message Added</div>
<svg style="left:1762px;top:223px;" width="12" height="14" viewBox="0 0 12 14"><path d="M1.2 1.2L11 7L1.2 12.8Z" fill="none" stroke="#9a9ca3" stroke-width="1.2" stroke-linejoin="round"/></svg>
<svg style="left:1788px;top:224px;" width="14" height="14" viewBox="0 0 14 14"><rect x="0.6" y="0.6" width="12.8" height="11.8" rx="1" fill="none" stroke="#676f83" stroke-width="1.2"/><path d="M7 0.6V13.6" stroke="#676f83" stroke-width="1.2"/></svg>
<svg style="left:1816px;top:228px;" width="14" height="4" viewBox="0 0 14 4"><circle cx="2" cy="2" r="1.3" fill="#9a9ca3"/><circle cx="7" cy="2" r="1.3" fill="#9a9ca3"/><circle cx="12" cy="2" r="1.3" fill="#9a9ca3"/></svg>
<div class="a" style="left:1847px;top:223px;width:1px;height:14px;background:#3a3a40;"></div>
<svg style="left:1867px;top:225px;" width="10" height="10" viewBox="0 0 10 10"><path d="M0.5 0.5L9.5 9.5M9.5 0.5L0.5 9.5" stroke="#9a9ca3" stroke-width="1.2"/></svg>
<div class="t" style="left:1418.0px;top:264.64px;font-size:12px;color:#e4e4e7;letter-spacing:-0.118px;">Emits newly added messages (e.g., new incoming mail) since last checkpoint.</div>
<div class="t" style="left:1418.0px;top:305.57px;font-size:13.5px;color:#fbfbfc;-webkit-text-stroke:0.459px #fbfbfc;letter-spacing:-0.473px;transform:scaleX(0.9719);transform-origin:0.0px 0;">SETTINGS</div>
<div class="t" style="left:1496.9px;top:305.57px;font-size:13.5px;color:#7d7f87;-webkit-text-stroke:0.459px #7d7f87;letter-spacing:-0.402px;">LAST RUN</div>
<div class="a" style="left:1418px;top:330px;width:63px;height:2px;background:#155aef;"></div>
<div class="a" style="left:1402px;top:333px;width:498px;height:1px;background:#34343a;"></div>
<svg style="left:1811px;top:305px;" width="14" height="13" viewBox="0 0 14 13"><circle cx="7" cy="3" r="2" fill="none" stroke="#d9d9de" stroke-width="1.1"/><circle cx="2.6" cy="10" r="2" fill="none" stroke="#d9d9de" stroke-width="1.1"/><circle cx="11.4" cy="10" r="2" fill="none" stroke="#d9d9de" stroke-width="1.1"/><path d="M6 4.8L3.6 8.3M4.6 10H9.4M8 4.8L10.4 8.3" fill="none" stroke="#d9d9de" stroke-width="1.1"/></svg>
<div class="t" style="left:1828.9px;top:306.19px;font-size:13px;color:#e4e4e7;-webkit-text-stroke:0.442px #e4e4e7;letter-spacing:-0.455px;transform:scaleX(0.9985);transform-origin:0.0px 0;">demo</div>
<svg style="left:1867px;top:309px;" width="10" height="6" viewBox="0 0 10 6"><path d="M1 1L5 5L9 1" fill="none" stroke="#7d7f87" stroke-width="1.1"/></svg>
<div class="t" style="left:1418.0px;top:365.22px;font-size:12.5px;color:#d9d9de;-webkit-text-stroke:0.425px #d9d9de;letter-spacing:-0.293px;">OUTPUT VARIABLES</div>
<svg style="left:1543px;top:367px;" width="6" height="7" viewBox="0 0 6 7"><path d="M0.5 0.5L5.5 3.5L0.5 6.5Z" fill="#7d7f87"/></svg>
<div class="a" style="left:1402px;top:398px;width:498px;height:1px;background:#34343a;"></div>
<div class="t" style="left:1418.0px;top:418.22px;font-size:12.5px;color:#d9d9de;-webkit-text-stroke:0.425px #d9d9de;letter-spacing:-0.438px;transform:scaleX(0.9736);transform-origin:0.0px 0;">NEXT STEP</div>
<div class="t" style="left:1418.0px;top:438.02px;font-size:12.5px;color:#7d7f87;letter-spacing:-0.159px;">Add the next step in this workflow</div>
<div class="a" style="left:1418px;top:463px;width:36px;height:36px;background:transparent;border-radius:10px;border:1px solid #3a3a40;"></div>
<div class="a" style="left:1426.5px;top:470.5px;width:19.0px;height:20.0px;background:#1f1f22;border-radius:5px;"></div>
<svg style="left:1427.7px;top:474.7px;" width="16.5" height="12.5" viewBox="52 42 88 66"><path fill="#4285f4" d="M58 108h14V74L52 59v43c0 3.32 2.69 6 6 6"/><path fill="#34a853" d="M120 108h14c3.32 0 6-2.69 6-6V59l-20 15"/><path fill="#fbbc04" d="M120 48v26l20-15v-8c0-7.42-8.47-11.65-14.4-7.2"/><path fill="#ea4335" d="M72 74V48l24 18 24-18v26L96 92"/><path fill="#c5221f" d="M52 51v8l20 15V48l-5.6-4.2c-5.94-4.45-14.4-.22-14.4 7.2"/></svg>
<div class="a" style="left:1454px;top:480px;width:24px;height:2px;background:#3a3a40;"></div>
<div class="a" style="left:1453px;top:478px;width:2px;height:6px;background:#5a5a60;border-radius:1px;"></div>
<div class="a" style="left:1477px;top:477px;width:2px;height:8px;background:#5a5a60;border-radius:1px;"></div>
<div class="a" style="left:1480px;top:465px;width:402px;height:36px;background:#252529;border-radius:10px;border:1px solid #3a3a40;"></div>
<div class="a" style="left:1489px;top:472.7px;width:20px;height:20.2px;background:#2e90fa;border-radius:5px;"></div>
<svg style="left:1489px;top:472.7px;" width="20" height="20" viewBox="0 0 20 20"><path d="M9.6 4.4A5.9 5.9 0 0 1 9.6 16.2Z" fill="#ffffff"/><g stroke="#ffffff" stroke-width="0.9"><path d="M7.8 4.8H9" opacity="0.6"/><path d="M5.8 6.8H9"/><path d="M4.6 8.9H9"/><path d="M4.6 10.3H9" opacity="0.5"/><path d="M4.6 11.8H9"/><path d="M5.8 13.8H9"/><path d="M7.8 15.7H9" opacity="0.6"/></g></svg>
<div class="t" style="left:1515.2px;top:477.42px;font-size:12.5px;color:#e8e8ea;-webkit-text-stroke:0.425px #e8e8ea;letter-spacing:-0.189px;">Template</div>
<div class="a" style="left:1480px;top:503px;width:402px;height:36px;background:#1f1f22;border-radius:10px;border:1px dashed #3a3a40;"></div>
<div class="a" style="left:1489px;top:511px;width:20px;height:20px;background:#2a2a2e;border-radius:5px;"></div>
<svg style="left:1494px;top:516px;" width="10" height="10" viewBox="0 0 10 10"><path d="M5 0.5V9.5M0.5 5H9.5" stroke="#5e6068" stroke-width="1.3"/></svg>
<div class="t" style="left:1515.2px;top:515.82px;font-size:12.5px;color:#5a5b62;letter-spacing:-0.438px;transform:scaleX(0.9269);transform-origin:0.0px 0;">ADD PARALLEL NODE</div>
<div class="a" style="left:1418px;top:1023px;width:32px;height:1px;background:#3a3a40;"></div>
<svg style="left:1419px;top:1038px;" width="11" height="10" viewBox="0 0 11 10"><rect x="0.6" y="0.6" width="9.8" height="8.8" fill="none" stroke="#9a9ca3" stroke-width="1.1"/><path d="M3.6 0.6V9.4M5.5 3H8.5M5.5 5H8.5" stroke="#9a9ca3" stroke-width="1.1"/></svg>
<div class="t" style="left:1434.5px;top:1037.42px;font-size:12.5px;color:#9a9ca3;letter-spacing:-0.438px;-webkit-text-stroke:0.25px #9a9ca3;transform:scaleX(0.9738);transform-origin:0.0px 0;">Need help? Check the README.</div>
</div>
<div id="wb" class="a"></div>
</body></html>
